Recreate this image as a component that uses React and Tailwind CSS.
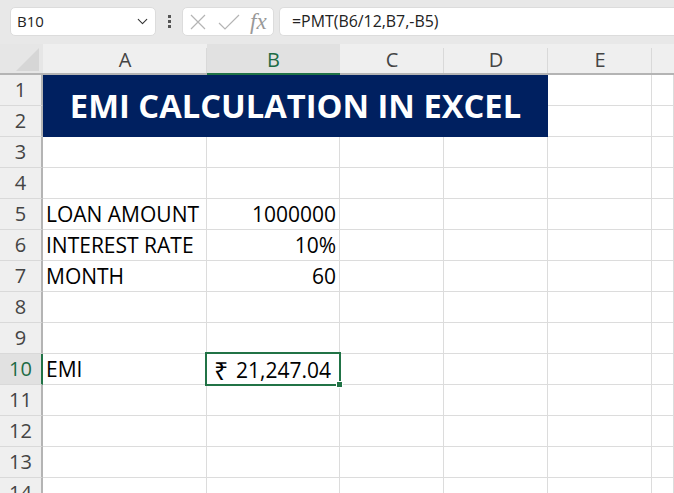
import React from 'react';
import { ChevronDown } from 'lucide-react';

const font = 'font-["Open_Sans","Liberation_Sans",sans-serif]';
const rows = [1, 2, 3, 4, 5, 6, 7, 8, 9, 10, 11, 12, 13, 14];
const cols = ['A', 'B', 'C', 'D', 'E'];

const data = {
  5: ['LOAN AMOUNT', '1000000'],
  6: ['INTEREST RATE', '10%'],
  7: ['MONTH', '60'],
  10: ['EMI', ''],
};

function Cell({ children, right }) {
  return (
    <div className={`border-r border-b border-[#dcdcdc] bg-white flex items-center overflow-hidden whitespace-nowrap text-[21px] text-black px-[3px] pt-[2px] ${right ? 'justify-end' : ''}`}>
      {children}
    </div>
  );
}

export default function App() {
  return (
    <div className={`w-[674px] h-[493px] overflow-hidden bg-white ${font}`}>
      {/* Formula bar */}
      <div className="h-[44px] bg-[#e8e8e8] flex items-start pt-[7px] pl-[10px]">
        <div className="w-[146px] h-[29px] bg-white border border-[#dcdcdc] rounded-[5px] flex items-center justify-between pl-[6px] pr-[4px] text-[15px] text-[#222]">
          <span>B10</span>
          <ChevronDown size={17} strokeWidth={1.5} className="text-[#333]" />
        </div>
        <div className="w-[26px] flex flex-col items-center gap-[2px] pt-[8px]">
          <span className="w-[3px] h-[3px] bg-[#555]" />
          <span className="w-[3px] h-[3px] bg-[#555]" />
          <span className="w-[3px] h-[3px] bg-[#555]" />
        </div>
        <div className="w-[92px] h-[29px] bg-white border border-[#dcdcdc] rounded-[5px] flex items-center pl-[6px] text-[#b4b4b4]">
          <svg width="18" height="16" viewBox="0 0 18 16" fill="none" stroke="currentColor" strokeWidth="1.2">
            <path d="M2 1 L16 15 M16 1 L2 15" />
          </svg>
          <svg width="22" height="16" viewBox="0 0 22 16" fill="none" stroke="currentColor" strokeWidth="1.2" className="ml-[11px]">
            <path d="M1 9 L7 15 L21 1" />
          </svg>
          <span className="ml-[10px] text-[23px] leading-none italic font-['Liberation_Serif',serif] text-[#999]">fx</span>
        </div>
        <div className="ml-[5px] flex-1 h-[29px] bg-white border-y border-l border-[#dcdcdc] rounded-l-[5px] flex items-center pl-[12px] text-[15.9px] text-[#222]">
          =PMT(B6/12,B7,-B5)
        </div>
      </div>

      {/* Sheet */}
      <div className="grid grid-cols-[43px_164px_133px_104px_104px_104px_22px] grid-rows-[31px_repeat(14,31px)]">
        <div className="bg-[#e6e6e6] border-b-2 border-[#b4b4b4] pt-[4px] pl-[16px]">
          <div className="w-0 h-0 border-l-[23px] border-l-transparent border-b-[23px] border-b-[#d6d6d6]" />
        </div>
        {cols.map((c) => (
          <div
            key={c}
            className={`relative flex items-center justify-center text-[20px] pt-[2px] border-b-2 ${
              c === 'B'
                ? 'bg-[#e1e1e1] text-[#1d6b45] border-[#217346]'
                : 'bg-[#efefef] text-[#444] border-[#b4b4b4]'
            }`}
          >
            {c}
            {c !== 'B' && <span className="absolute right-0 top-[4px] bottom-0 w-px bg-[#d9d9d9]" />}
          </div>
        ))}
        <div className="bg-[#efefef] border-b-2 border-[#b4b4b4]" />

        {rows.map((r) => (
          <React.Fragment key={r}>
            <div
              className={`flex items-center justify-center text-[20px] border-b border-[#d9d9d9] border-r-2 ${
                r === 10
                  ? 'bg-[#e1e1e1] text-[#1d6b45] border-r-[#217346]'
                  : 'bg-[#efefef] text-[#444] border-r-[#b4b4b4]'
              }`}
            >
              {r}
            </div>
            {r === 1 && (
              <div className="col-span-4 row-span-2 bg-[#002060] flex items-center justify-center text-white font-bold text-[32.7px] whitespace-nowrap">
                EMI CALCULATION IN EXCEL
              </div>
            )}
            {r > 2 && <Cell>{data[r]?.[0]}</Cell>}
            {r > 2 && r !== 10 && <Cell right>{data[r]?.[1]}</Cell>}
            {r === 10 && (
              <div className="relative bg-white flex items-center justify-between pl-[7px] pr-[9px] pt-[2px] text-[21px] text-black whitespace-nowrap z-10">
                <span className="text-[25px] leading-none">₹</span>
                <span>21,247.04</span>
                <span className="absolute -left-[2px] -top-[2px] -right-px -bottom-px border-2 border-[#217346]" />
                <span className="absolute right-[-3px] bottom-[-3px] w-[5px] h-[5px] bg-[#217346] border border-white box-content" />
              </div>
            )}
            {r > 2 && <Cell />}
            {r > 2 && <Cell />}
            <Cell />
            <Cell />
          </React.Fragment>
        ))}
      </div>
    </div>
  );
}
